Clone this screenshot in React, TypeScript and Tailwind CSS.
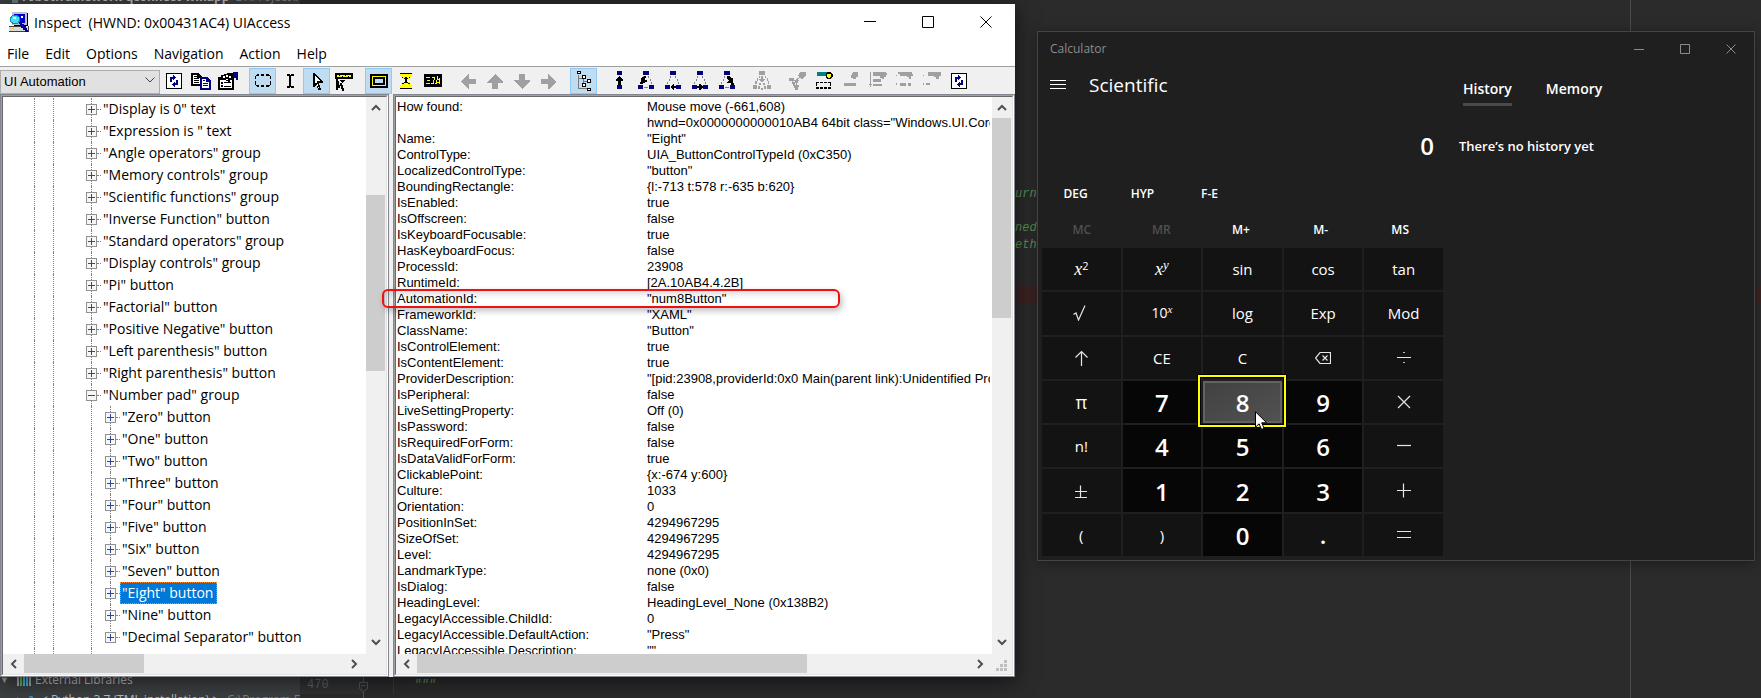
import React from "react";

const SEGOE = "font-['Open_Sans','Noto_Sans',sans-serif]";

/* ---------- Toolbar icons (20x20 grid) ---------- */

function Icon({ children }: { children: React.ReactNode }) {
  return (
    <svg viewBox="0 0 20 20" className="h-5 w-5 shrink-0" shapeRendering="crispEdges" aria-hidden="true">
      {children}
    </svg>
  );
}

const NAVY = "#000080";
const GREY = "#a0a0a0";

const refreshIcon = (
  <Icon>
    <path d="M2 2h16v16H2z" fill="#000" />
    <path d="M3 3h14v14H3z" fill="#fff" />
    <path d="M9 4h1v1h1v1h1v1h-1v1h-1v1H9V8H8v3H6V6h3zM11 16h-1v-1H9v-1H8v-1h1v-1h1v-1h1v1h1V9h2v5h-3z" fill={NAVY} />
  </Icon>
);

const copyIcon = (
  <Icon>
    <path d="M0 2h7l4 4v9H0z" fill="#000" />
    <path d="M2 4h4v3h3v6H2z" fill="#fff" />
    <path d="M3 5h3v1H3zM3 7h5v1H3zM3 9h5v1H3zM3 11h5v1H3z" fill="#000" />
    <path d="M9 6h7l4 4v9H9z" fill={NAVY} />
    <path d="M11 8h4v3h3v6h-7z" fill="#fff" />
    <path d="M12 9h2v1h-2zM12 12h5v1h-5zM12 14h5v1h-5z" fill={NAVY} />
  </Icon>
);

const propsIcon = (
  <Icon>
    <path d="M0 6h16v13H0z" fill="#000" />
    <path d="M2 9h12v8H2z" fill="#fff" />
    <path d="M3 11h2v2H3zM6 11h7v1H6zM3 14h2v2H3zM6 15h7v1H6z" fill="#000" />
    <path d="M3 4h3V3h3V2h8v2h-2v2h-1v3h-2v2h-2v-1H8V8H5V7H3z" fill="#000" />
    <path d="M5 5h2v2H5zM8 4h2v2H8zM8 8h2v1H8zM11 5h2v2h-2z" fill="#fff" />
    <path d="M15 1h5v8h-2V7h-3z" fill={NAVY} />
  </Icon>
);

const dashedRectIcon = (
  <Icon>
    <path d="M4 3h2v1H4zM8 3h3v1H8zM13 3h3v1h-3zM3 4h3v1H3zM8 4h3v1H8zM13 4h4v1h-4zM2 5h1v3H2zM2 10h1v4H2zM17 5h1v3h-1zM17 10h1v4h-1zM3 14h3v1H3zM8 14h3v1H8zM13 14h4v1h-4zM4 15h2v1H4zM8 15h3v1H8zM13 15h3v1h-3z" fill="#000" />
  </Icon>
);

const caretIcon = (
  <Icon>
    <path d="M7 3h3v1h1V3h3v2h-3v10h3v2h-3v-1h-1v1H7v-2h2V5H7z" fill="#000" />
  </Icon>
);

const cursorIcon = (
  <Icon>
    <path d="M6 2h2v1h1v1h1v1h1v1h1v1h1v1h1v1h1v1h1v2h-4v2h1v3h1v2h-3v-2h-1v-3H9v1H8v1H6z" fill="#000" />
    <path d="M8 5h1v1h1v1h1v1h1v1h1v1h-3v3h1v3h1v1h-1v-2h-1v-3H8z" fill="#fff" />
  </Icon>
);

const hoverTipIcon = (
  <Icon>
    <path d="M1 2h18v6H1z" fill="#000" />
    <path d="M3 4h14v2H3z" fill="#ff0" />
    <path d="M5 4h1v1H5zM8 5h1v1H8zM11 4h1v1h-1zM14 5h1v1h-1z" fill="#000" />
    <path d="M2 8h2v2h1V9h6v1h-1v1H9v1H8v2h1v3h1v3H8v-2H7v-3H6v2H4v2H2z" fill="#000" />
    <path d="M5 9h1v1h1v1h1v1H6v2H5z" fill="#eee" />
  </Icon>
);

const highlightRectIcon = (
  <Icon>
    <path d="M1 3h18v14H1z" fill="#000" />
    <path d="M3 5h14v10H3z" fill="#ff0" />
    <path d="M4 6h12v8H4z" fill="#000" />
    <path d="M6 8h8v4H6z" fill="#bfdcf1" />
  </Icon>
);

const hourglassIcon = (
  <Icon>
    <path d="M4 2h12v3h-1v1h-1v1h-1v1h-2v3h2v1h1v1h1v1h1v4H4v-4h1v-1h1v-1h1v-1h2V8H7V7H6V6H5V5H4z" fill="#ff0" />
    <path d="M4 2h12v1H4zM9 6h2v1h1v1h-1v3h1v1h1v1h-1v-1H8v1H7v-1h1v-1h1V8H8V7h1zM6 6h1v1H6zM13 6h1v1h-1zM6 12h1v1H6zM13 12h1v1h-1zM4 17h12v1H4z" fill="#000" />
  </Icon>
);

const captionIcon = (
  <Icon>
    <path d="M1 3h18v13H1z" fill="#000" />
    <path d="M3 6h4v1H3zM4 9h3v1H4zM3 12h4v1H3zM9 6h3v1H9zM11 7h1v2h-1zM10 9h1v4H8v-1h2zM14 5h1v3h2v1h-3zM13 9h1v4h-1zM16 7h1v6h-1zM14 11h2v1h-2zM12 12h1v1h-1z" fill="#ff0" />
  </Icon>
);

const leftArrow = (
  <Icon>
    <path d="M3 11l7-8h1v5h7v5h-7v5h-1z" fill={GREY} />
  </Icon>
);
const upArrow = (
  <Icon>
    <path d="M10 3l8 8v1h-5v6H7v-6H2v-1z" fill={GREY} />
  </Icon>
);
const downArrow = (
  <Icon>
    <path d="M10 18l8-8V9h-5V3H7v6H2v1z" fill={GREY} />
  </Icon>
);
const rightArrow = (
  <Icon>
    <path d="M17 11l-7-8H9v5H2v5h7v5h1z" fill={GREY} />
  </Icon>
);

const treeIcon = (
  <Icon>
    <path d="M4 4h1v14H4zM4 7h4v1H4zM4 17h9v1H4zM9 8h1v6H9zM9 10h4v1H9z" fill="#777" />
    <path d="M3 0h4v3H3zM8 4h4v4H8zM13 8h4v4h-4zM8 12h4v4H8zM13 17h4v3h-4z" fill="#000" />
    <path d="M4 1h2v1H4zM9 5h2v2H9zM14 9h2v2h-2zM9 13h2v2H9zM14 18h2v1h-2z" fill="#fff" />
  </Icon>
);

const parentIcon = (
  <Icon>
    <path d="M8 0h5v4H8zM8 14h5v4H8z" fill={NAVY} />
    <path d="M10 5h1v1h1v1h1v1h1v2h-2v4H9v-4H7V8h1V7h1V6h1z" fill="#000" />
  </Icon>
);

const triangleBase = (
  <>
    <path d="M7 0h6v4H7zM2 14h5v4H2zM13 14h5v4h-5z" fill={NAVY} />
    <path d="M7 5h1v2H7zM6 8h1v2H6zM4 11h1v2H4zM12 5h1v2h-1zM14 8h1v2h-1zM15 11h1v2h-1zM8 16h4v1H8z" fill="#808080" />
  </>
);
const firstChildIcon = (
  <Icon>
    {triangleBase}
    <path d="M8 5h2v2H9v2h2v2H9v1H5v-5h1V6h2zM4 11h3v2H4z" fill="#000" />
  </Icon>
);
const prevSiblingIcon = (
  <Icon>
    {triangleBase}
    <path d="M7 16l3-3h1v2h2v2h-2v2h-1z" fill="#000" />
  </Icon>
);
const nextSiblingIcon = (
  <Icon>
    {triangleBase}
    <path d="M13 16l-3-3H9v2H7v2h2v2h1z" fill="#000" />
  </Icon>
);
const lastChildIcon = (
  <Icon>
    {triangleBase}
    <path d="M10 5h3v1h1v1h2v5h1v2h-3v-2h-4v-1h1v-1h1V9h-1V8h-1z" fill="#000" />
  </Icon>
);

const ancestorsIcon = (
  <Icon>
    <path d="M7 0h6v4H7zM1 14h4v4H1zM15 14h4v4h-4zM7 5h1v2H7zM5 7h1v3H5zM3 10h2v3H3zM13 5h1v2h-1zM15 7h1v3h-1zM16 10h1v3h-1zM9 5h2v3h2v1h-1v1h-1v1H9v-1H8V9H7V8h2zM7 12h2v2H7zM11 12h2v2h-2zM6 15h2v3H6zM12 15h2v3h-2zM9 17h2v2H9z" fill={GREY} />
  </Icon>
);

const focusIcon = (
  <Icon>
    <path d="M13 1h6v4h-1v1h-1v1h-1v1h-2V7h-2V5h-1V4h1V2h1zM2 7h5v2h2V8h1V7h2v1h-1v1h1v1h-1v2h-1v2h2v2h-1v3H8v-2H7v-2H6v-2H5v-3H2z" fill={GREY} />
    <path d="M6 10h2v1H6zM8 12h1v2H8z" fill="#f0f0f0" />
  </Icon>
);

const actionIcon = (
  <Icon>
    <path d="M3 1h11v4H3z" fill="#008080" />
    <path d="M12 2h1V1h4v1h1v1h1v3h-1v1h-1v1h-4V7h-1z" fill="#000" />
    <path d="M13 3h4v3h-1v1h-2V6h-1z" fill="#ff0" />
    <path d="M2 11h3v1H2zM6 11h3v1H6zM10 11h3v1h-3zM14 11h3v1h-3zM2 12h1v3H2zM16 12h1v3h-1zM2 16h3v2H2zM6 16h3v2H6zM10 16h3v2h-3zM14 16h3v2h-3z" fill="#000" />
  </Icon>
);

const pushIcon = (
  <Icon>
    <path d="M12 1h5v5h-2v2h-3V7h-2V4h1V2h1zM3 12h12v3H3z" fill={GREY} />
  </Icon>
);

const listPushIcon = (
  <Icon>
    <path d="M2 1h1v12h1v1H3v2H2v-2H1v-1h1zM5 1h13v1h1v2h-1v2h-2v2h-2V7h-2V5H5zM5 8h8v3H5zM5 13h9v2H5z" fill={GREY} />
  </Icon>
);

const stepPushIcon = (
  <Icon>
    <path d="M3 1h14v2h1v2h-2v3h-2V6h-2V5H5V3H3zM1 4h1v1H1zM1 12h1v2H1zM5 12h6v3H5zM13 12h3v3h-3z" fill={GREY} />
  </Icon>
);

const lastPushIcon = (
  <Icon>
    <path d="M6 1h13v4h-2v3h-3V6h-2V5H6zM1 4h1v1H1zM1 12h1v2H1zM4 12h4v2H4z" fill={GREY} />
  </Icon>
);

type Tool = { label: string; icon: React.ReactNode; on?: boolean };

const toolGroups: Tool[][] = [
  [
    { label: "Refresh", icon: refreshIcon },
    { label: "Copy", icon: copyIcon },
    { label: "Settings", icon: propsIcon },
  ],
  [
    { label: "Watch focus", icon: dashedRectIcon, on: true },
    { label: "Watch caret", icon: caretIcon },
    { label: "Watch cursor", icon: cursorIcon, on: true },
    { label: "Watch tooltips", icon: hoverTipIcon },
  ],
  [
    { label: "Show highlight rectangle", icon: highlightRectIcon, on: true },
    { label: "Show caret highlight", icon: hourglassIcon },
    { label: "Show information tooltip", icon: captionIcon },
  ],
  [
    { label: "Left", icon: leftArrow },
    { label: "Up", icon: upArrow },
    { label: "Down", icon: downArrow },
    { label: "Right", icon: rightArrow },
  ],
  [{ label: "Show tree", icon: treeIcon, on: true }],
  [
    { label: "Parent", icon: parentIcon },
    { label: "First child", icon: firstChildIcon },
    { label: "Previous sibling", icon: prevSiblingIcon },
    { label: "Next sibling", icon: nextSiblingIcon },
    { label: "Last child", icon: lastChildIcon },
  ],
  [{ label: "Ancestors", icon: ancestorsIcon }],
  [
    { label: "Set focus", icon: focusIcon },
    { label: "Default action", icon: actionIcon },
    { label: "Push", icon: pushIcon },
    { label: "Push list", icon: listPushIcon },
    { label: "Push step", icon: stepPushIcon },
    { label: "Push last", icon: lastPushIcon },
    { label: "Reload", icon: refreshIcon },
  ],
];

function ToolButton({ tool }: { tool: Tool }) {
  return (
    <button
      type="button"
      aria-label={tool.label}
      className={`flex h-[26px] w-[27px] shrink-0 items-center justify-center ${
        tool.on ? "border border-[#90c8f6] bg-[#bfdcf1]" : ""
      }`}
    >
      {tool.icon}
    </button>
  );
}

/* ---------- Scroll bars ---------- */

function Chevron({ d }: { d: string }) {
  return (
    <svg viewBox="0 0 10 10" className="h-2.5 w-2.5" fill="none" stroke="#505050" strokeWidth="2" aria-hidden="true">
      <path d={d} />
    </svg>
  );
}

const UP = "M1 7l4-4 4 4";
const DOWN = "M1 3l4 4 4-4";
const LEFT = "M7 1L3 5l4 4";
const RIGHT = "M3 1l4 4-4 4";

function VScroll({ thumb }: { thumb: string }) {
  return (
    <div className="flex w-5 shrink-0 flex-col items-stretch bg-[#f0f0f0]">
      <button type="button" aria-label="Scroll up" className="flex h-[21px] items-center justify-center">
        <Chevron d={UP} />
      </button>
      <div className="flex-1">
        <div className={`mr-px bg-[#cdcdcd] ${thumb}`} />
      </div>
      <button type="button" aria-label="Scroll down" className="flex h-6 items-center justify-center">
        <Chevron d={DOWN} />
      </button>
    </div>
  );
}

function HScroll({ thumb, grip }: { thumb: string; grip?: boolean }) {
  return (
    <div className="flex h-5 items-stretch bg-[#f0f0f0]">
      <button type="button" aria-label="Scroll left" className="flex w-[21px] items-center justify-center">
        <Chevron d={LEFT} />
      </button>
      <div className="flex-1">
        <div className={`h-[19px] bg-[#cdcdcd] ${thumb}`} />
      </div>
      <button type="button" aria-label="Scroll right" className="flex w-6 items-center justify-center">
        <Chevron d={RIGHT} />
      </button>
      <div className="flex w-5 items-end justify-center pb-0.5">
        {grip && (
          <svg viewBox="0 0 12 12" className="h-3 w-3" shapeRendering="crispEdges" aria-hidden="true">
            <path d="M8 0h3v3H8zM4 4h3v3H4zM8 4h3v3H8zM0 8h3v3H0zM4 8h3v3H4zM8 8h3v3H8z" fill="#bfbfbf" />
          </svg>
        )}
      </div>
    </div>
  );
}

function Pane({ className, children }: { className: string; children: React.ReactNode }) {
  return (
    <div className={`border border-[#828790] ${className}`}>
      <div className="border border-t-[#a0a0a0] border-r-white border-b-white border-l-[#a0a0a0]">
        <div className="border border-t-[#696969] border-r-[#e3e3e3] border-b-[#e3e3e3] border-l-[#696969]">
          {children}
        </div>
      </div>
    </div>
  );
}

/* ---------- Tree ---------- */

const topNodes = [
  '"Display is 0" text',
  '"Expression is " text',
  '"Angle operators" group',
  '"Memory controls" group',
  '"Scientific functions" group',
  '"Inverse Function" button',
  '"Standard operators" group',
  '"Display controls" group',
  '"Pi" button',
  '"Factorial" button',
  '"Positive Negative" button',
  '"Left parenthesis" button',
  '"Right parenthesis" button',
  '"Number pad" group',
];

const padNodes = [
  '"Zero" button',
  '"One" button',
  '"Two" button',
  '"Three" button',
  '"Four" button',
  '"Five" button',
  '"Six" button',
  '"Seven" button',
  '"Eight" button',
  '"Nine" button',
  '"Decimal Separator" button',
];

function Guide({ line }: { line?: boolean }) {
  return (
    <span className="flex w-[19px] shrink-0 justify-center">
      {line && <span className="border-l border-dotted border-[#808080]" />}
    </span>
  );
}

function TreeRow({ label, child, open, selected, last }: { label: string; child?: boolean; open?: boolean; selected?: boolean; last?: boolean }) {
  return (
    <li className="flex h-[22px] items-stretch pl-[22px]">
      <Guide line />
      <Guide line />
      <Guide />
      {child && <Guide line />}
      <button type="button" aria-label={open ? "Collapse" : "Expand"} className="relative flex w-[19px] shrink-0 items-center justify-center">
        <span className={`absolute top-0 left-[9px] border-l border-dotted border-[#808080] ${last ? "h-[11px]" : "h-full"}`} />
        <span className="absolute top-[11px] right-0 w-1 border-t border-dotted border-[#808080]" />
        <svg viewBox="0 0 11 11" className="relative h-[11px] w-[11px]" shapeRendering="crispEdges" aria-hidden="true">
          <path d="M0 0h11v11H0z" fill="#919191" />
          <path d="M1 1h9v9H1z" fill="#f6f6f6" />
          <path d={open ? "M2 5h7v1H2z" : "M2 5h7v1H2zM5 2h1v7H5z"} fill="#2f4a8c" />
        </svg>
      </button>
      <span
        className={`pr-1 pl-0.5 text-[14px] leading-[22px] whitespace-pre ${
          selected ? "bg-[#0078d7] text-white outline-1 -outline-offset-1 outline-dotted outline-[#ff8728]" : "text-black"
        }`}
      >
        {label}
      </span>
    </li>
  );
}

/* ---------- Properties ---------- */

const properties: [string, string][] = [
  ["How found:", "Mouse move (-661,608)"],
  ["", 'hwnd=0x0000000000010AB4 64bit class="Windows.UI.Core.CoreWindow"'],
  ["Name:", '"Eight"'],
  ["ControlType:", "UIA_ButtonControlTypeId (0xC350)"],
  ["LocalizedControlType:", '"button"'],
  ["BoundingRectangle:", "{l:-713 t:578 r:-635 b:620}"],
  ["IsEnabled:", "true"],
  ["IsOffscreen:", "false"],
  ["IsKeyboardFocusable:", "true"],
  ["HasKeyboardFocus:", "false"],
  ["ProcessId:", "23908"],
  ["RuntimeId:", "[2A.10AB4.4.2B]"],
  ["AutomationId:", '"num8Button"'],
  ["FrameworkId:", '"XAML"'],
  ["ClassName:", '"Button"'],
  ["IsControlElement:", "true"],
  ["IsContentElement:", "true"],
  ["ProviderDescription:", '"[pid:23908,providerId:0x0 Main(parent link):Unidentified Provider'],
  ["IsPeripheral:", "false"],
  ["LiveSettingProperty:", "Off (0)"],
  ["IsPassword:", "false"],
  ["IsRequiredForForm:", "false"],
  ["IsDataValidForForm:", "true"],
  ["ClickablePoint:", "{x:-674 y:600}"],
  ["Culture:", "1033"],
  ["Orientation:", "0"],
  ["PositionInSet:", "4294967295"],
  ["SizeOfSet:", "4294967295"],
  ["Level:", "4294967295"],
  ["LandmarkType:", "none (0x0)"],
  ["IsDialog:", "false"],
  ["HeadingLevel:", "HeadingLevel_None (0x138B2)"],
  ["LegacyIAccessible.ChildId:", "0"],
  ["LegacyIAccessible.DefaultAction:", '"Press"'],
  ["LegacyIAccessible.Description:", '""'],
];

function InspectWindow() {
  return (
    <section aria-label="Inspect" className={`mt-1 self-start bg-white text-black shadow-[0_4px_20px_rgba(0,0,0,0.6)] ${SEGOE}`}>
      <header className="flex h-9 items-center pl-[9px]">
        <svg viewBox="0 0 20 20" className="h-5 w-5 shrink-0" shapeRendering="crispEdges" aria-hidden="true">
          <path d="M3 0h15v13H3z" fill="#c0c0c0" />
          <path d="M18 1h1v13H5v-1h13z" fill="#000" />
          <path d="M5 2h11v9H5z" fill="#0000d0" />
          <path d="M12 4h2v2h-2z" fill="#fff" />
          <path d="M0 14h17l2 2v3H0z" fill="#d8d8d8" />
          <path d="M0 14h17v1H0zM0 19h20v1H0zM19 14h1v6h-1z" fill="#404040" />
          <path d="M3 16h2v1H3z" fill="#e8d800" />
          <path d="M3 3h6v1h1v1h1v5h-1v1H9v1H3v-1H2v-1H1V5h1V4h1z" fill="#008cc8" />
          <path d="M3 4h5v1h2v4H9v2H4v-1H2V6h1z" fill="#40e0f0" />
          <path d="M4 5h3v2H4z" fill="#e0ffff" />
          <path d="M10 10h2v1h1v1h2v2h2v2h1v2h1v2h-3v-2h-2v-2h-2v-2h-1v-2h-1z" fill="#0000a8" />
        </svg>
        <h1 className="ml-[5px] flex-1 pt-px text-[14px] leading-5 whitespace-pre">Inspect  (HWND: 0x00431AC4) UIAccess</h1>
        <button type="button" aria-label="Minimize" className="flex h-full w-[58px] items-center justify-center">
          <svg viewBox="0 0 12 12" className="h-3 w-3" stroke="#000" fill="none" aria-hidden="true"><path d="M0 5.5h12" /></svg>
        </button>
        <button type="button" aria-label="Maximize" className="flex h-full w-[58px] items-center justify-center">
          <svg viewBox="0 0 12 12" className="h-3 w-3" stroke="#000" fill="none" aria-hidden="true"><path d="M.5.5h11v11H.5z" /></svg>
        </button>
        <button type="button" aria-label="Close" className="flex h-full w-[58px] items-center justify-center">
          <svg viewBox="0 0 12 12" className="h-3 w-3" stroke="#000" fill="none" aria-hidden="true"><path d="M.5.5l11 11M11.5.5l-11 11" /></svg>
        </button>
      </header>
      <nav className="flex h-[26px] items-center gap-4 pt-px pl-[7px] text-[14px] leading-5">
        {["File", "Edit", "Options", "Navigation", "Action", "Help"].map((m) => (
          <button key={m} type="button">{m}</button>
        ))}
      </nav>
      <div className="flex h-7 items-start overflow-hidden border-t border-[#a0a0a0] bg-[#f0f0f0] pt-px">
        <div className="relative h-6 w-40 shrink-0">
          <select
            aria-label="Mode"
            className="h-6 w-full appearance-none border border-[#adadad] bg-[#e1e1e1] pl-[3px] font-['Liberation_Sans',Arial,sans-serif] text-[13px] text-black"
          >
            <option>UI Automation</option>
          </select>
          <svg viewBox="0 0 10 6" className="pointer-events-none absolute top-[9px] right-[5px] h-1.5 w-2.5" fill="none" stroke="#444" aria-hidden="true">
            <path d="M.5.5L5 5 9.5.5" />
          </svg>
        </div>
        <div className="flex gap-2">
          {toolGroups.map((g, i) => (
            <div key={i} className="flex">
              {g.map((t) => <ToolButton key={t.label} tool={t} />)}
            </div>
          ))}
        </div>
      </div>

      <div className="relative flex bg-[#f0f0f0]">
        <Pane className="w-[389px] shrink-0">
          <div className="flex h-[557px] bg-white">
            <ul className="flex flex-1 flex-col overflow-hidden pt-px">
              {topNodes.map((n, i) => <TreeRow key={n} label={n} open={i === 13} />)}
              {padNodes.map((n, i) => <TreeRow key={n} label={n} child selected={i === 8} last={i === 10} />)}
              <li className="flex flex-1 items-stretch pl-[22px]" aria-hidden="true">
                <Guide line />
                <Guide line />
                <Guide />
                <Guide line />
              </li>
            </ul>
            <VScroll thumb="mt-[77px] h-[176px]" />
          </div>
          <HScroll thumb="w-[120px]" />
        </Pane>
        <Pane className="ml-1 min-w-0 flex-1">
          <div className="flex h-[557px] bg-white">
            <div className="min-w-0 flex-1 overflow-hidden pt-0.5 pr-0.5 pl-px">
              <table className="w-full table-fixed border-collapse font-['Liberation_Sans',Arial,sans-serif] text-[13px] leading-4">
                <tbody>
                  {properties.map(([k, v], i) => (
                    <tr key={i} className="h-4">
                      <th scope="row" className="w-[250px] p-0 text-left font-normal whitespace-nowrap">{k}</th>
                      <td className="overflow-hidden p-0 whitespace-nowrap">{v}</td>
                    </tr>
                  ))}
                </tbody>
              </table>
            </div>
            <VScroll thumb="h-[200px]" />
          </div>
          <HScroll thumb="w-[390px]" grip />
        </Pane>
        <div className="pointer-events-none absolute top-[195px] left-[382px] h-[19px] w-[458px] rounded-md border-2 border-[#f01010] shadow-[2px_3px_6px_rgba(0,0,0,0.25),inset_2px_3px_6px_rgba(0,0,0,0.15)]" />
      </div>
    </section>
  );
}

/* ---------- Calculator ---------- */

function Glyph({ d }: { d: string }) {
  return (
    <svg viewBox="0 0 16 16" className="h-4 w-4" fill="none" stroke="#e6e6e6" strokeWidth="1.2" aria-hidden="true">
      <path d={d} />
    </svg>
  );
}

const math = "font-['Liberation_Serif',serif] italic";

const keys: { name: string; face: React.ReactNode; digit?: boolean }[] = [
  { name: "Square", face: <span><i className={`${math} text-[18px]`}>x</i><sup className="text-[11px]">2</sup></span> },
  { name: "Power", face: <span className={`${math} text-[18px]`}>x<sup className="text-[13px]">y</sup></span> },
  { name: "Sine", face: "sin" },
  { name: "Cosine", face: "cos" },
  { name: "Tangent", face: "tan" },
  { name: "Square root", face: <Glyph d="M.5 9.500l2.500-1.500 2.500 7L12 .5" /> },
  { name: "Ten to the power", face: <span className="text-[14px]">10<sup className={`${math} text-[11px]`}>x</sup></span> },
  { name: "Log", face: "log" },
  { name: "Exponential", face: "Exp" },
  { name: "Modulo", face: "Mod" },
  { name: "Inverse function", face: <Glyph d="M8.500 16V1.500M2.500 7.500l6-6 6 6" /> },
  { name: "Clear entry", face: "CE" },
  { name: "Clear", face: "C" },
  { name: "Backspace", face: <Glyph d="M5 2.5h10.5v11H5L.5 8zM7.5 5.5l5 5M12.5 5.5l-5 5" /> },
  { name: "Divide", face: <Glyph d="M1 7.500h14M7.200 2.500h1.600M7.200 12.500h1.600" /> },
  { name: "Pi", face: <span className="text-[18px]">π</span> },
  { name: "Seven", face: "7", digit: true },
  { name: "Eight", face: "8", digit: true },
  { name: "Nine", face: "9", digit: true },
  { name: "Multiply", face: <Glyph d="M2 2l12 12M14 2L2 14" /> },
  { name: "Factorial", face: "n!" },
  { name: "Four", face: "4", digit: true },
  { name: "Five", face: "5", digit: true },
  { name: "Six", face: "6", digit: true },
  { name: "Minus", face: <Glyph d="M1 7.5h14" /> },
  { name: "Positive negative", face: <Glyph d="M2 8.500h12M7.500 2.500v12M2 14.500h12" /> },
  { name: "One", face: "1", digit: true },
  { name: "Two", face: "2", digit: true },
  { name: "Three", face: "3", digit: true },
  { name: "Plus", face: <Glyph d="M1 7.5h14M7.500 .5v14" /> },
  { name: "Left parenthesis", face: "(" },
  { name: "Right parenthesis", face: ")" },
  { name: "Zero", face: "0", digit: true },
  { name: "Decimal separator", face: <span className="text-[24px] font-semibold">.</span> },
  { name: "Equals", face: <Glyph d="M1 4.5h14M1 10.5h14" /> },
];

function CalcKey({ k }: { k: (typeof keys)[number] }) {
  const hot = k.name === "Eight";
  const tone = hot
    ? "bg-linear-to-br from-[#414141] to-[#525252] inset-ring-2 inset-ring-[#626262]"
    : k.digit
      ? "bg-[#060606]"
      : "bg-[#131313]";
  return (
    <button
      type="button"
      aria-label={k.name}
      className={`relative flex items-center justify-center leading-6 ${k.digit ? "pt-0.5 text-[24px] font-semibold" : "text-[15px]"} ${tone}`}
    >
      {k.face}
      {hot && (
        <>
          <span className="pointer-events-none absolute -top-[7px] -right-[5px] -bottom-[5px] -left-[6px] z-10 border border-black">
            <span className="block h-full border-2 border-[#ffff00]">
              <span className="block h-full border border-black" />
            </span>
          </span>
          <svg viewBox="0 0 13 20" className="pointer-events-none absolute top-[30px] left-[52px] z-20 h-5 w-[13px]" aria-hidden="true">
            <path d="M.5.8v15.4l3.6-3.4 2.400 5.600 2.600-1-2.400-5.600h5z" fill="#fff" stroke="#000" strokeWidth="1" />
          </svg>
        </>
      )}
    </button>
  );
}

function Calculator() {
  return (
    <section
      aria-label="Calculator"
      className={`col-start-3 mt-[31px] self-start border border-[#444444] bg-[#1f1f1f] text-white shadow-[0_2px_12px_rgba(0,0,0,0.35)] ${SEGOE}`}
    >
      <header className="flex h-[33px] items-center pl-3 text-[#8c8c8c]">
        <h2 className="flex-1 text-[12px] leading-4">Calculator</h2>
        <button type="button" aria-label="Minimize" className="flex h-full w-[46px] items-center justify-center">
          <svg viewBox="0 0 10 10" className="h-2.5 w-2.5" stroke="currentColor" fill="none" aria-hidden="true"><path d="M0 5.5h10" /></svg>
        </button>
        <button type="button" aria-label="Maximize" className="flex h-full w-[46px] items-center justify-center">
          <svg viewBox="0 0 10 10" className="h-2.5 w-2.5" stroke="currentColor" fill="none" aria-hidden="true"><path d="M.5.5h9v9h-9z" /></svg>
        </button>
        <button type="button" aria-label="Close" className="flex h-full w-[46px] items-center justify-center">
          <svg viewBox="0 0 10 10" className="h-2.5 w-2.5" stroke="currentColor" fill="none" aria-hidden="true"><path d="M.5.5l9 9M9.5.5l-9 9" /></svg>
        </button>
      </header>
      <div className="flex">
        <div className="min-w-0 flex-1 pb-1 pl-1">
          <div className="flex h-10 items-center pl-2">
            <button type="button" aria-label="Open navigation" className="mr-[23px]">
              <svg viewBox="0 0 16 10" className="h-2.5 w-4" stroke="#fff" aria-hidden="true"><path d="M0 .5h16M0 4.5h16M0 8.5h16" /></svg>
            </button>
            <h3 className="text-[19px] leading-6">Scientific</h3>
          </div>
          <div className="flex h-[72px] items-center justify-end pt-2.5 pr-2.5 text-[24px] leading-8 font-semibold">0</div>
          <div className="flex h-8 items-center pt-0.5 text-[12px] leading-4 font-semibold">
            {["DEG", "HYP", "F-E"].map((t) => (
              <button key={t} type="button" className="w-[67px] text-center">{t}</button>
            ))}
          </div>
          <div className="grid h-[39px] grid-cols-5 items-center pt-0.5 pr-1 text-[12px] leading-4 font-semibold">
            {["MC", "MR", "M+", "M-", "MS"].map((t, i) => (
              <button key={t} type="button" className={i < 2 ? "text-[#505050]" : ""}>{t}</button>
            ))}
          </div>
          <div className="grid h-[308px] grid-cols-5 grid-rows-7 gap-0.5 pr-px">
            {keys.map((k) => <CalcKey key={k.name} k={k} />)}
          </div>
        </div>
        <aside className="w-[310px] shrink-0 pl-[15px]">
          <div className="flex h-[41px] items-end gap-[34px] pl-1 text-[14px] leading-5 font-semibold">
            <button type="button" className="border-b-[3px] border-[#4a4a4a] pb-1">History</button>
            <button type="button" className="border-b-[3px] border-transparent pb-1">Memory</button>
          </div>
          <p className="mt-[30px] text-[13px] leading-5 font-semibold">There’s no history yet</p>
        </aside>
      </div>
    </section>
  );
}

/* ---------- Editor behind the windows ---------- */

function Ide() {
  return (
    <div className="absolute inset-0 flex overflow-hidden bg-[#2b2b2b]">
      <div className="flex w-[300px] shrink-0 flex-col overflow-hidden bg-[#3c3f41] text-[13px] leading-5 text-[#bbbbbb] font-['Open_Sans','Noto_Sans',sans-serif]">
        <div className="-mt-[13px] flex h-5 items-center whitespace-nowrap">
          <span className="w-[18px] pl-[3px] text-[9px]">▼</span>
          <span className="mr-1 h-3 w-3.5 bg-[#6c7a84]" />
          <b className="mr-1.5 text-[12px]">robotframework-qconnect-winapp</b>
          <span className="text-[12px] text-[#808080]">D:\Project\r</span>
        </div>
        <div className="mt-auto -mb-3">
          <div className="flex h-5 items-center">
            <span className="w-[17px] text-[9px] text-[#9a9a9a]">▼</span>
            <svg viewBox="0 0 14 12" className="h-3 w-3.5" aria-hidden="true">
              <path d="M0 2h2v10H0zM12 0h2v12h-2z" fill="#9aa7b0" />
              <path d="M3 0h2v12H3z" fill="#62b543" />
              <path d="M6 2h2v10H6zM9 1h2v11H9z" fill="#40b6e0" />
            </svg>
            <span className="ml-1 text-[12px]">External Libraries</span>
          </div>
          <div className="flex h-5 items-center pl-[17px] whitespace-nowrap">
            <span className="w-[18px] text-[9px] text-[#9a9a9a]">▶</span>
            <svg viewBox="0 0 14 14" className="h-3.5 w-3.5" aria-hidden="true">
              <path d="M4 0h5l2 2v4H4v2H0V4l3-1h5V2H4z" fill="#3c8fc4" />
              <path d="M10 14H5l-2-2V8h7V6h4v4l-3 1H6v1h4z" fill="#f4c430" />
            </svg>
            <span className="ml-1.5 text-[12px]">&lt; Python 3.7 (TML installation) &gt;</span>
            <span className="ml-2 text-[12px] text-[#808080]">C:\Program F</span>
          </div>
        </div>
      </div>
      <div className="relative flex flex-1 flex-col font-['Liberation_Mono',monospace] text-[12px] leading-[17px] text-[#5a9150]">
        <div className="pt-[186px] pl-[715px] italic">
          <p>urn</p>
          <p className="mt-[17px]">ned</p>
          <p>ethod</p>
        </div>
        <div className="mt-8 h-[17px] bg-[#3a2323]" />
        <div className="mt-auto flex h-[21px] items-start">
          <span className="w-[63px] bg-[#2f3132] pl-[7px] text-[#606366]">470</span>
          <svg viewBox="0 0 10 21" className="-ml-1 h-[21px] w-2.5" stroke="#555" fill="none" aria-hidden="true">
            <path d="M4.500 0v6M4.500 15v6M.5 5.500h8v6l-4 3-4-3zM2.500 8.500h4" />
          </svg>
          <span className="ml-6 h-4 border-l border-[#3a3a3a]" />
          <span className="ml-5 italic">"""</span>
        </div>
        <span className="absolute inset-y-0 right-[130px] border-l border-[#4b4b4b]" />
      </div>
    </div>
  );
}

export default function App() {
  return (
    <main className="relative min-h-screen overflow-hidden bg-[#2b2b2b]">
      <Ide />
      <div className="relative grid grid-cols-[1015fr_22fr_718fr_6fr]">
        <InspectWindow />
        <Calculator />
      </div>
    </main>
  );
}
